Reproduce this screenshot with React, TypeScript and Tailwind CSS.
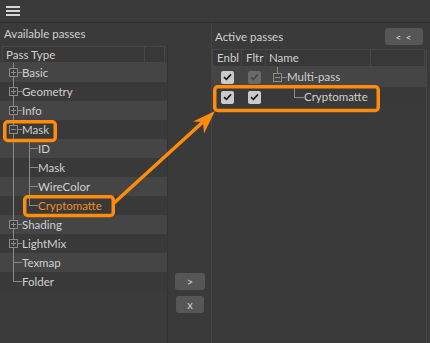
import React from "react";

type Kind = "plus" | "minus" | "child" | "lastChild" | "leaf" | "lastLeaf";

type TreeRow = { label: string; kind: Kind; active?: boolean };

const treeRows: TreeRow[] = [
  { label: "Basic", kind: "plus" },
  { label: "Geometry", kind: "plus" },
  { label: "Info", kind: "plus" },
  { label: "Mask", kind: "minus" },
  { label: "ID", kind: "child" },
  { label: "Mask", kind: "child" },
  { label: "WireColor", kind: "child" },
  { label: "Cryptomatte", kind: "lastChild", active: true },
  { label: "Shading", kind: "plus" },
  { label: "LightMix", kind: "plus" },
  { label: "Texmap", kind: "leaf" },
  { label: "Folder", kind: "lastLeaf" },
];

const LINE = "#8a8a8a";

function TreeGlyph({ kind }: { kind: Kind }) {
  const nested = kind === "child" || kind === "lastChild";
  const w = nested ? 38 : 22;
  return (
    <svg width={w} height={19} className="shrink-0" shapeRendering="crispEdges">
      {/* parent level trunk */}
      <line x1={13.5} y1={0} x2={13.5} y2={kind === "lastLeaf" ? 9.5 : 19} stroke={LINE} />
      {(kind === "plus" || kind === "minus") && (
        <>
          <rect x={9.5} y={5.5} width={8} height={8} fill="#3c3c3c" stroke={LINE} />
          <line x1={11} y1={9.5} x2={16} y2={9.5} stroke={LINE} />
          {kind === "plus" && <line x1={13.5} y1={7} x2={13.5} y2={12} stroke={LINE} />}
          <line x1={18} y1={9.5} x2={22} y2={9.5} stroke={LINE} />
        </>
      )}
      {(kind === "leaf" || kind === "lastLeaf") && (
        <line x1={13.5} y1={9.5} x2={22} y2={9.5} stroke={LINE} />
      )}
      {nested && (
        <>
          <line x1={29.5} y1={0} x2={29.5} y2={kind === "lastChild" ? 9.5 : 19} stroke={LINE} />
          <line x1={29.5} y1={9.5} x2={38} y2={9.5} stroke={LINE} />
        </>
      )}
    </svg>
  );
}

function Check({ dim }: { dim?: boolean }) {
  return (
    <span
      className={`flex h-[13px] w-[13px] items-center justify-center rounded-[2px] ${
        dim ? "bg-[#6a6a6a]" : "bg-[#cacaca]"
      }`}
    >
      <svg width="9" height="8" viewBox="0 0 9 8">
        <path
          d="M1 4.2 L3.4 6.4 L8 1.4"
          fill="none"
          stroke={dim ? "#454545" : "#1e1e1e"}
          strokeWidth="1.6"
        />
      </svg>
    </span>
  );
}

export default function App() {
  return (
    <div
      className="relative h-[343px] w-[430px] overflow-hidden bg-[#3a3a3a] text-[11.5px] text-[#d0d0d0]"
      style={{ fontFamily: "Lato, 'Noto Sans', sans-serif" }}
    >
      {/* Menu bar */}
      <div className="h-[23px] border-b border-[#2f2f2f] pl-[6px] pt-[6px]">
        <div className="flex w-[14px] flex-col gap-[2px]">
          <span className="h-[2px] bg-[#d6d6d6]" />
          <span className="h-[2px] bg-[#d6d6d6]" />
          <span className="h-[2px] bg-[#d6d6d6]" />
        </div>
      </div>

      <div className="flex h-[320px]">
        {/* Available passes */}
        <div className="flex w-[211px] flex-col">
          <div className="flex h-[21px] items-center pl-[4px]">Available passes</div>
          <div className="flex flex-1">
            <div className="w-[168px] border-r border-[#333333] bg-[#3b3b3b]">
              <div className="flex h-[19px] px-[2px] pt-[2px]">
                <div className="flex w-[143px] items-center border border-[#474747] bg-[#383838] pl-[3px]">
                  Pass Type
                </div>
                <div className="flex-1 border border-l-0 border-[#474747] bg-[#383838]" />
              </div>
              <div className="flex flex-col">
                {treeRows.map((r, i) => (
                  <div
                    key={i}
                    className={`flex h-[19px] items-center ${
                      i % 2 === 0 ? "bg-[#454545]" : "bg-[#393939]"
                    }`}
                  >
                    <TreeGlyph kind={r.kind} />
                    <span className={r.active ? "text-[#f28c28]" : ""}>{r.label}</span>
                  </div>
                ))}
              </div>
            </div>

            <div className="flex flex-1 flex-col items-center justify-end gap-[6px] pb-[30px] pl-[1px]">
              <button className="h-[17px] w-[30px] rounded-[3px] bg-[#565656] text-[11px] leading-none text-[#d0d0d0]">
                &gt;
              </button>
              <button className="h-[17px] w-[28px] rounded-[3px] bg-[#565656] text-[11px] leading-none text-[#d0d0d0]">
                x
              </button>
            </div>
          </div>
        </div>

        {/* Active passes */}
        <div className="flex flex-1 flex-col border-l border-[#464646]">
          <div className="flex h-[26px] items-center justify-between pb-[1px] pl-[3px] pr-[7px] pt-[2px]">
            <span>Active passes</span>
            <button className="h-[17px] w-[38px] rounded-[3px] bg-[#565656] text-[10px] leading-none tracking-[1px] text-[#d8dde6]">
              &lt; &lt;
            </button>
          </div>
          <div className="mr-[3px] flex-1 border-r border-[#464646]">
            <div className="flex h-[18px]">
              <div className="flex w-[30px] items-center border border-[#474747] bg-[#383838] pl-[4px]">Enbl</div>
              <div className="flex w-[24px] items-center border border-l-0 border-[#474747] bg-[#383838] pl-[4px]">Fltr</div>
              <div className="flex w-[105px] items-center border border-l-0 border-[#474747] bg-[#383838] pl-[3px]">Name</div>
              <div className="w-[54px] border border-l-0 border-[#474747] bg-[#383838]" />
            </div>
            <div className="flex h-[20px] items-center bg-[#454545]">
              <div className="flex w-[30px] justify-center"><Check /></div>
              <div className="flex w-[24px] justify-center"><Check dim /></div>
              <svg width="22" height="20" className="ml-[3px] shrink-0" shapeRendering="crispEdges">
                <line x1={8.5} y1={0} x2={8.5} y2={6} stroke={LINE} />
                <rect x={4.5} y={6.5} width={8} height={8} fill="#454545" stroke={LINE} />
                <line x1={6} y1={10.5} x2={11} y2={10.5} stroke={LINE} />
                <line x1={13} y1={10.5} x2={18} y2={10.5} stroke={LINE} />
              </svg>
              <span className="-ml-[4px]">Multi-pass</span>
            </div>
            <div className="flex h-[20px] items-center bg-[#393939]">
              <div className="flex w-[30px] justify-center"><Check /></div>
              <div className="flex w-[24px] justify-center"><Check /></div>
              <svg width="38" height="20" className="shrink-0" shapeRendering="crispEdges">
                <line x1={28.5} y1={0} x2={28.5} y2={10.5} stroke={LINE} />
                <line x1={28.5} y1={10.5} x2={38} y2={10.5} stroke={LINE} />
              </svg>
              <span>Cryptomatte</span>
            </div>
          </div>
        </div>
      </div>

      {/* Annotation overlay */}
      <svg className="pointer-events-none absolute inset-0" width="430" height="343">
        <g fill="none" stroke="#ff8c0a" strokeWidth="3.5">
          <rect x="4.75" y="121.75" width="50.5" height="18.75" rx="3" />
          <rect x="24.75" y="196.75" width="88.5" height="18.75" rx="3" />
          <rect x="214.75" y="86.75" width="163.5" height="23.75" rx="3" />
          <line x1="114" y1="203" x2="204" y2="121" strokeLinecap="round" />
        </g>
        <polygon points="215,111 193,121.5 203,122 204,133.5" fill="#ff8c0a" />
      </svg>
    </div>
  );
}
